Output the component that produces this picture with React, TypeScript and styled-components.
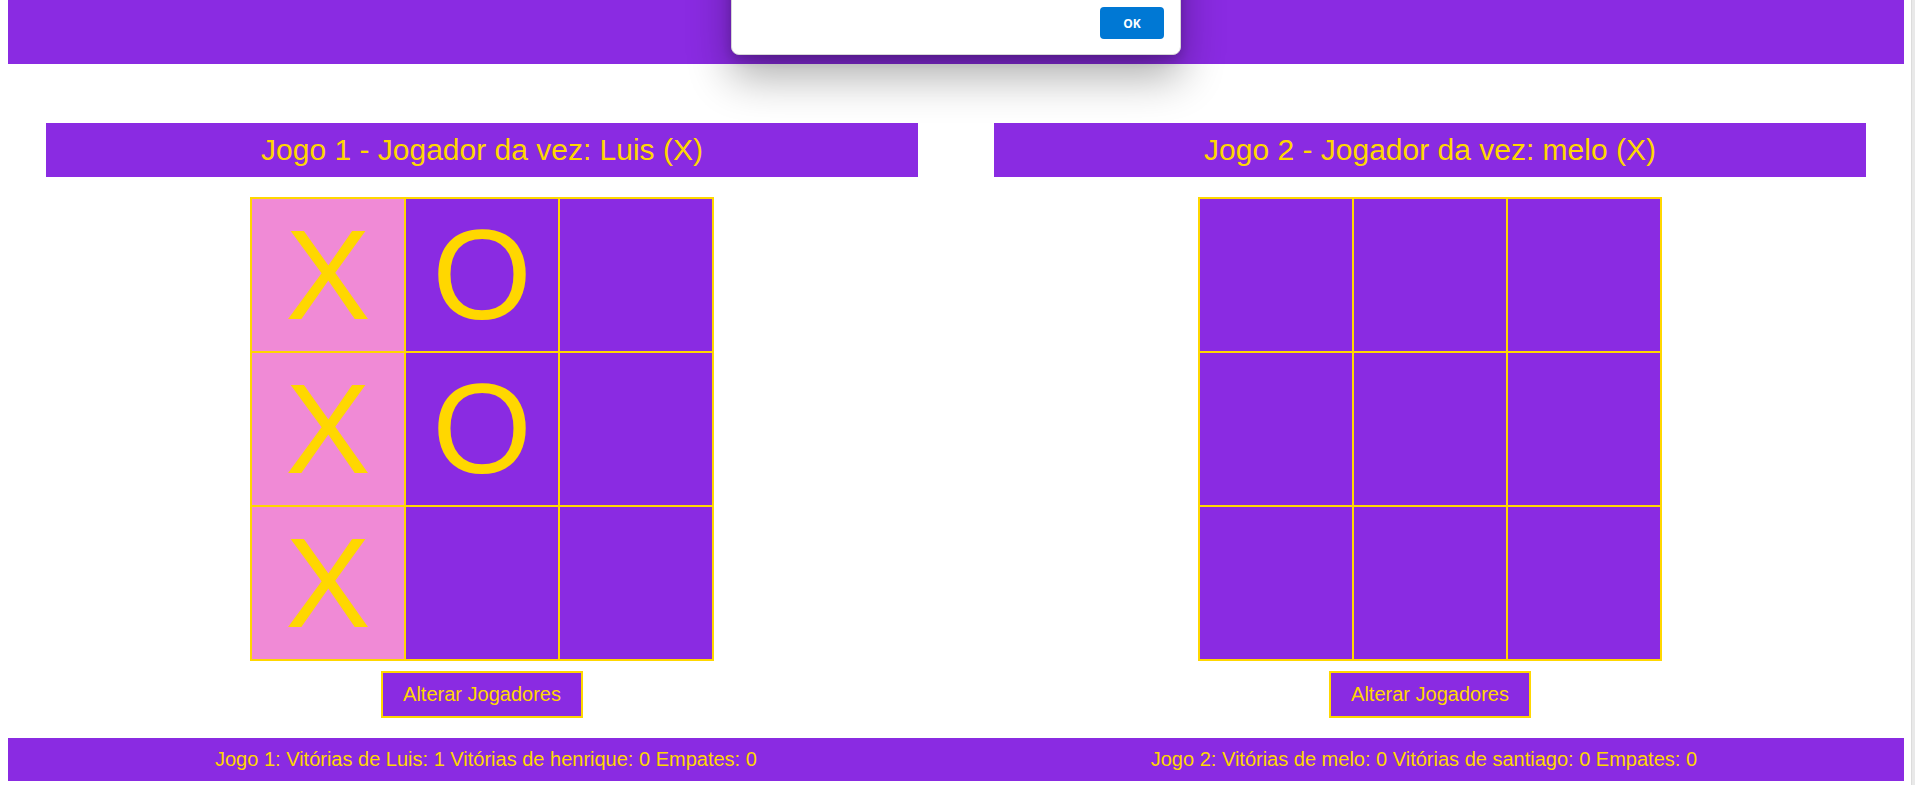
import React from "react";
import styled, { createGlobalStyle } from "styled-components";

const PURPLE = "#8a2be2";
const GOLD = "#ffd700";
const PINK = "#f08ad6";

const GlobalStyle = createGlobalStyle`
  html, body {
    margin: 0;
    overflow: hidden;
    background: #ffffff;
  }
  body {
    padding: 0 11px 0 8px;
    font-family: "Liberation Sans", Arial, sans-serif;
  }
`;

const Header = styled.header`
  height: 64px;
  background: ${PURPLE};
`;

const Games = styled.main`
  display: flex;
  justify-content: space-around;
  padding-top: 59px;
`;

const Game = styled.section`
  width: 46%;
  display: flex;
  flex-direction: column;
  align-items: center;
`;

const Title = styled.h2`
  align-self: stretch;
  margin: 0 0 20px;
  padding: 10px;
  background: ${PURPLE};
  color: ${GOLD};
  font-size: 30px;
  font-weight: normal;
  text-align: center;
`;

const Board = styled.div`
  display: grid;
  grid-template-columns: repeat(3, 154px);
  border: 1px solid ${GOLD};
`;

const Cell = styled.div<{ $win?: boolean }>`
  box-sizing: border-box;
  width: 154px;
  height: 154px;
  border: 1px solid ${GOLD};
  background: ${(p) => (p.$win ? PINK : PURPLE)};
  color: ${GOLD};
  font-size: 128px;
  line-height: 1;
  display: flex;
  align-items: center;
  justify-content: center;
`;

const Button = styled.button`
  margin-top: 10px;
  padding: 10px 20px;
  background: ${PURPLE};
  color: ${GOLD};
  border: 2px solid ${GOLD};
  font-family: inherit;
  font-size: 20px;
  cursor: pointer;
`;

const Footer = styled.footer`
  margin-top: 20px;
  padding: 10px 207px;
  display: flex;
  justify-content: space-between;
  background: ${PURPLE};
  color: ${GOLD};
  font-size: 20px;
`;

const Dialog = styled.div`
  position: fixed;
  top: -100px;
  left: 731px;
  width: 450px;
  height: 155px;
  box-sizing: border-box;
  background: #ffffff;
  border: 1px solid #d6d6d6;
  border-radius: 8px;
  box-shadow: 0 22px 44px rgba(0, 0, 0, 0.32), 0 4px 12px rgba(0, 0, 0, 0.18);
  display: flex;
  justify-content: flex-end;
  align-items: flex-end;
  padding: 0 16px 15px;
  z-index: 10;
`;

const OkButton = styled.button`
  width: 64px;
  height: 32px;
  border: none;
  border-radius: 4px;
  background: #0078d4;
  color: #ffffff;
  font-family: "Open Sans", "Noto Sans", sans-serif;
  font-size: 12px;
  font-weight: 700;
`;

const ScrollStrip = styled.div`
  position: fixed;
  top: 0;
  right: 0;
  bottom: 0;
  width: 3px;
  background: #e9e9e9;
  border-left: 1px solid #dcdcdc;
`;

type Mark = "X" | "O" | "";

const game1: Mark[] = ["X", "O", "", "X", "O", "", "X", "", ""];
const win1 = [0, 3, 6];
const game2: Mark[] = ["", "", "", "", "", "", "", "", ""];

function GameBoard({ title, cells, win }: { title: string; cells: Mark[]; win: number[] }) {
  return (
    <Game>
      <Title>{title}</Title>
      <Board>
        {cells.map((c, i) => (
          <Cell key={i} $win={win.includes(i)}>
            {c}
          </Cell>
        ))}
      </Board>
      <Button>Alterar Jogadores</Button>
    </Game>
  );
}

export default function App() {
  return (
    <>
      <GlobalStyle />
      <Header />
      <Games>
        <GameBoard title="Jogo 1 - Jogador da vez: Luis (X)" cells={game1} win={win1} />
        <GameBoard title="Jogo 2 - Jogador da vez: melo (X)" cells={game2} win={[]} />
      </Games>
      <Footer>
        <span>Jogo 1: Vitórias de Luis: 1 Vitórias de henrique: 0 Empates: 0</span>
        <span>Jogo 2: Vitórias de melo: 0 Vitórias de santiago: 0 Empates: 0</span>
      </Footer>
      <Dialog>
        <OkButton>OK</OkButton>
      </Dialog>
      <ScrollStrip />
    </>
  );
}
